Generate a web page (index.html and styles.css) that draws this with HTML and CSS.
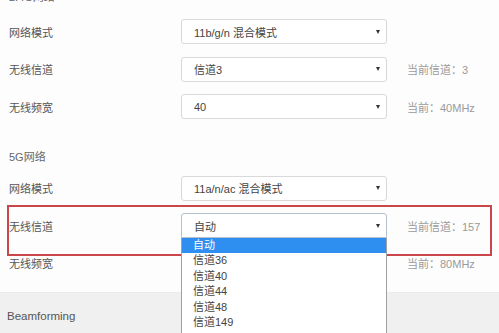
FILE: index.html
```html
<!DOCTYPE html>
<html>
<head>
<meta charset="utf-8">
<link rel="stylesheet" href="styles.css">
</head>
<body>
<div class="page">
  <div class="title title-top">2.4G网络</div>
  <div class="row first">
    <div class="label">网络模式</div>
    <div class="select"><span class="val">11b/g/n 混合模式</span><span class="arrow"></span></div>
  </div>
  <div class="row">
    <div class="label">无线信道</div>
    <div class="select"><span class="val">信道3</span><span class="arrow"></span></div>
    <div class="hint">当前信道：3</div>
  </div>
  <div class="row">
    <div class="label">无线频宽</div>
    <div class="select"><span class="val">40</span><span class="arrow"></span></div>
    <div class="hint">当前：40MHz</div>
  </div>

  <div class="title title-5g">5G网络</div>
  <div class="row first">
    <div class="label">网络模式</div>
    <div class="select"><span class="val">11a/n/ac 混合模式</span><span class="arrow"></span></div>
  </div>
  <div class="row">
    <div class="label">无线信道</div>
    <div class="select focus"><span class="val">自动</span><span class="arrow"></span></div>
    <div class="hint">当前信道：157</div>
  </div>
  <div class="row">
    <div class="label">无线频宽</div>
    <div class="select"><span class="val"></span><span class="arrow"></span></div>
    <div class="hint">当前：80MHz</div>
  </div>

  <div class="bar">Beamforming</div>

  <div class="redbox"></div>
  <ul class="dropdown">
    <li class="sel">自动</li>
    <li>信道36</li>
    <li>信道40</li>
    <li>信道44</li>
    <li>信道48</li>
    <li>信道149</li>
  </ul>
</div>
</body>
</html>
```

FILE: styles.css
```css
html, body {
  margin: 0;
  padding: 0;
  background: #fdfdfd;
  overflow: hidden;
}
body {
  width: 499px;
  height: 333px;
  font-family: "Liberation Sans", Arial, "Noto Sans CJK SC", sans-serif;
  font-size: 11px;
  color: #555;
}
.page {
  position: relative;
  width: 499px;
  height: 333px;
  overflow: hidden;
}
.title {
  height: 15px;
  line-height: 15px;
  padding-left: 9px;
  color: #666;
}
.title-top {
  margin-top: -10px;
}
.title-5g {
  margin-top: 30.5px;
}
.row {
  display: flex;
  align-items: center;
  height: 25px;
  margin-top: 12.5px;
}
.row.first {
  margin-top: 14px;
}
.title-5g + .row.first {
  margin-top: 11px;
}
.label {
  width: 172px;
  padding-left: 9px;
  color: #555;
}
.select {
  box-sizing: border-box;
  width: 206px;
  height: 25px;
  border: 1px solid #d9d9d9;
  border-radius: 3px;
  background: #fff;
  display: flex;
  align-items: center;
  padding-left: 12px;
  padding-right: 6px;
  color: #444;
}
.select.focus {
  border-color: #b4c2d0;
  border-radius: 3px 3px 0 0;
}
.val {
  flex: 1;
}
.arrow {
  width: 0;
  height: 0;
  border-left: 2.5px solid transparent;
  border-right: 2.5px solid transparent;
  border-top: 4px solid #333;
}
.hint {
  margin-left: 20px;
  color: #9a9a9a;
}
.bar {
  margin-top: 16px;
  height: 50px;
  background: #f0f0f0;
  border-top: 1px solid #ececec;
  padding-left: 7px;
  padding-top: 16px;
  box-sizing: border-box;
  line-height: 15px;
  font-size: 11.5px;
  color: #555;
}
.redbox {
  position: absolute;
  left: 7px;
  top: 205px;
  width: 485px;
  height: 51px;
  box-sizing: border-box;
  border: 2px solid #c9474b;
}
.dropdown {
  position: absolute;
  left: 181px;
  top: 238px;
  width: 206px;
  height: 100px;
  box-sizing: border-box;
  margin: 0;
  padding: 0;
  list-style: none;
  background: #fff;
  border-left: 1px solid #a0a0a0;
  border-right: 1px solid #a0a0a0;
  color: #444;
}
.dropdown li {
  height: 15.4px;
  line-height: 15.4px;
  padding-left: 11px;
}
.dropdown li.sel {
  background: #2f8ff0;
  color: #fff;
}
```
